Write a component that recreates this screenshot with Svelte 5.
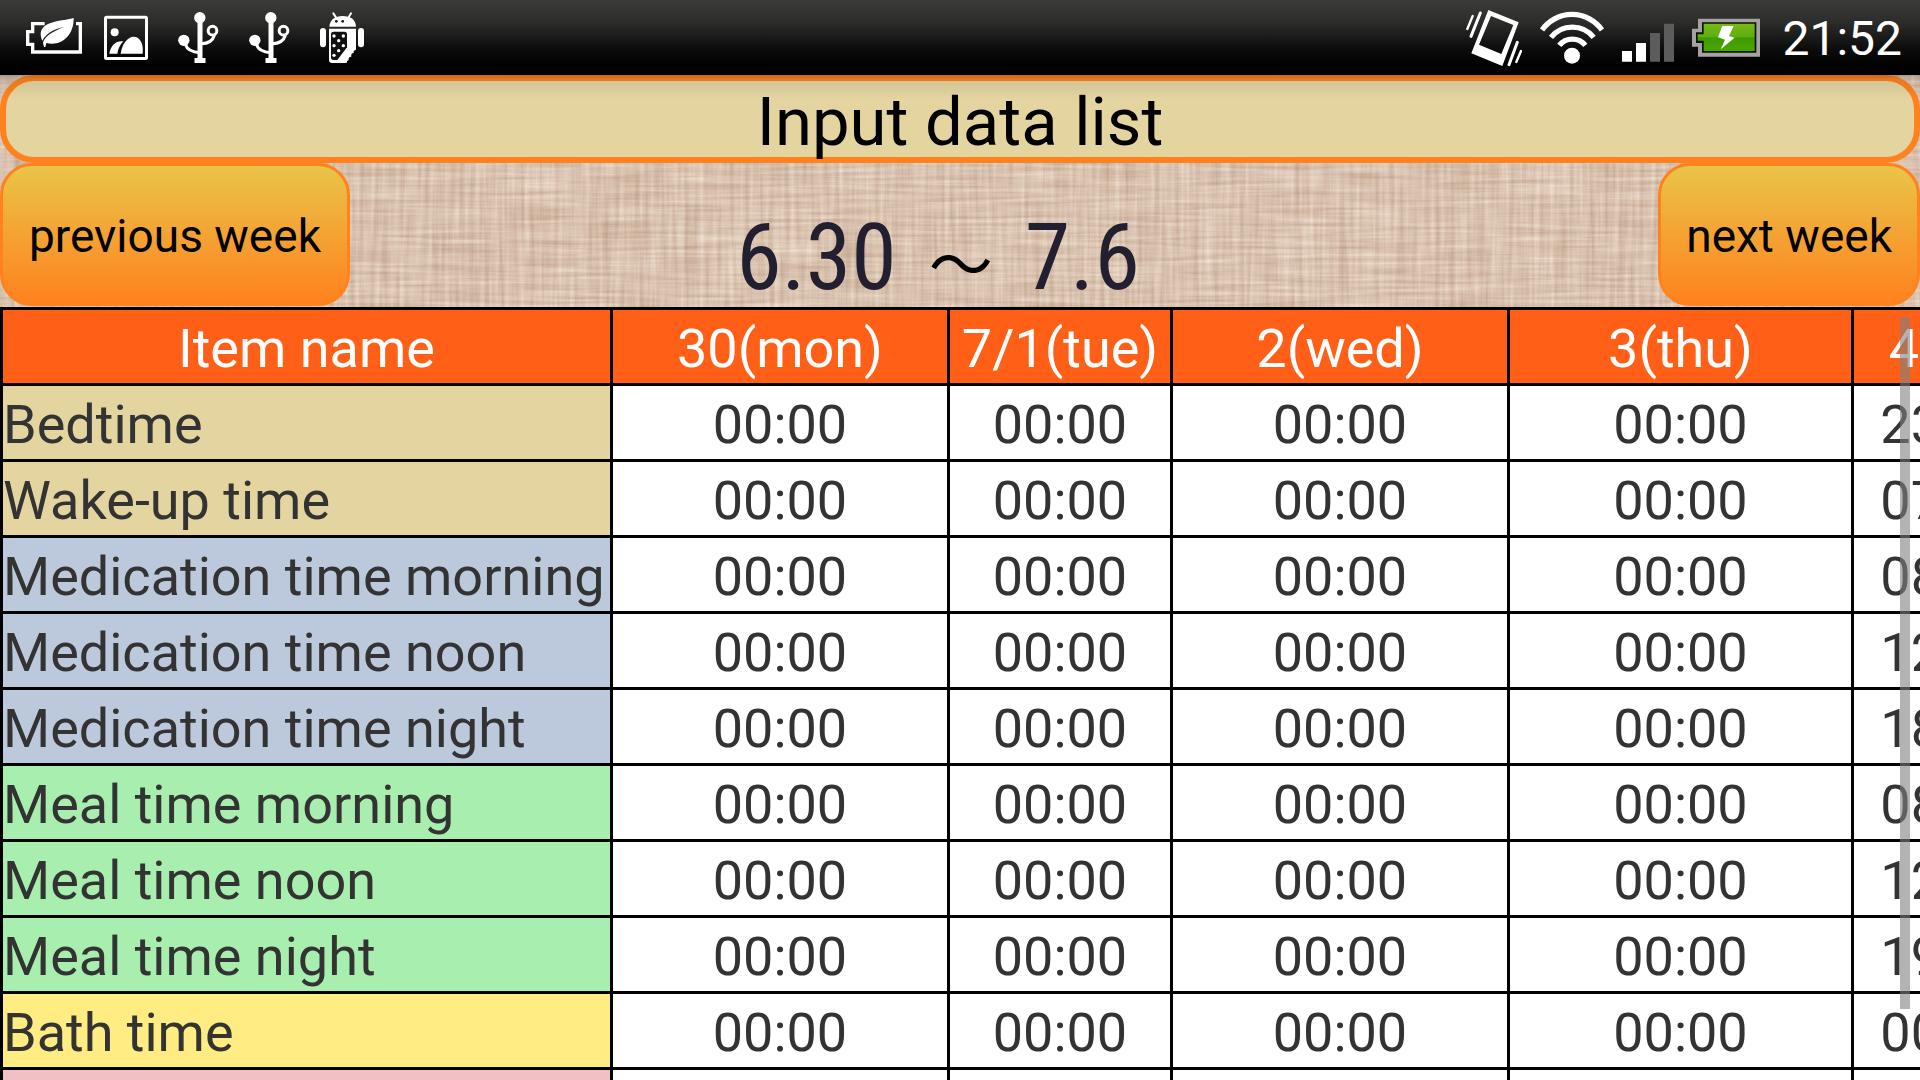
<script>
  const columns = [
    { label: 'Item name', width: 31.77 },
    { label: '30(mon)', width: 17.55 },
    { label: '7/1(tue)', width: 11.62 },
    { label: '2(wed)', width: 17.55 },
    { label: '3(thu)', width: 17.92 },
    { label: '4(fri)', width: 9.9 }
  ];

  const row = (name, tone, friday) => ({ name, tone, times: ['00:00', '00:00', '00:00', '00:00', friday] });
  const rows = [
    row('Bedtime', 'sleep', '23:00'),
    row('Wake-up time', 'sleep', '07:00'),
    row('Medication time morning', 'medication', '08:00'),
    row('Medication time noon', 'medication', '12:00'),
    row('Medication time night', 'medication', '18:00'),
    row('Meal time morning', 'meal', '08:00'),
    row('Meal time noon', 'meal', '12:00'),
    row('Meal time night', 'meal', '19:00'),
    row('Bath time', 'bath', '00:00'),
    { name: '', tone: 'other', times: ['', '', '', '', ''] }
  ];
</script>

{#snippet usb()}
  <svg class="usb" viewBox="533 0 122 225" aria-hidden="true">
    <g fill="#fff">
      <circle cx="598" cy="53" r="17" />
      <path d="M591 53H606V174H615V189H582V174H591Z" />
      <circle cx="550" cy="121" r="17" />
    </g>
    <g fill="none" stroke="#fff" stroke-width="9">
      <path d="M554 132C560 150 577 157 598 158" />
      <circle cx="636" cy="92" r="13" />
      <path d="M642 105C637 122 622 131 602 131" />
    </g>
  </svg>
{/snippet}

<div class="screen">
  <svg class="linen" aria-hidden="true">
    <filter id="weave" x="0" y="0" width="100%" height="100%" color-interpolation-filters="sRGB">
      <feTurbulence type="fractalNoise" baseFrequency="0.012 0.26" numOctaves="3" seed="4" result="h" />
      <feColorMatrix in="h" values="1 0 0 0 0  1 0 0 0 0  1 0 0 0 0  0 0 0 0 1" result="weft" />
      <feTurbulence type="fractalNoise" baseFrequency="0.2 0.01" numOctaves="3" seed="9" result="v" />
      <feColorMatrix in="v" values="1 0 0 0 0  1 0 0 0 0  1 0 0 0 0  0 0 0 0 1" result="warp" />
      <feComposite in="weft" in2="warp" operator="arithmetic" k1="0" k2="0.5" k3="0.5" k4="0" />
      <feColorMatrix values="0.3 0 0 0 0.7  0.38 0 0 0 0.57  0.42 0 0 0 0.475  0 0 0 0 1" />
    </filter>
    <rect width="100%" height="100%" filter="url(#weave)" />
  </svg>

  <header class="status">
    <div class="icons left">
      <svg class="eco" viewBox="78 0 168 225" aria-hidden="true">
        <path d="M134 71H98V95H83V133H98V156H241V71H228" fill="none" stroke="#fff" stroke-width="10" />
        <path d="M221 54C190 64 128 60 122 100C122 110 124 117 127 122C140 97 164 87 193 80C164 92 134 106 129 128L132 141H136L139 129C182 140 222 108 221 54Z" fill="#fff" />
      </svg>
      <svg class="photo" viewBox="312 0 132 225" aria-hidden="true">
        <rect x="316.500" y="51.500" width="123" height="124" rx="3" fill="none" stroke="#fff" stroke-width="9" />
        <g fill="#fff">
          <circle cx="344" cy="97" r="12" />
          <path d="M328 161C332 136 348 121 370 124C360 134 354 147 352 161Z" />
          <path d="M362 161C366 130 384 110 401 110C420 110 431 130 428 161Z" />
        </g>
      </svg>
      {@render usb()}
      {@render usb()}
      <svg class="droid" viewBox="960 0 132 225" aria-hidden="true">
        <g fill="#fff">
          <path d="M988 80C990 58 1006 48 1028 48C1051 48 1067 58 1068 80Z" />
          <rect x="960" y="84" width="18" height="58" rx="9" />
          <rect x="1074" y="84" width="18" height="58" rx="9" />
          <path d="M987 86H1068V149Q1059 151 1061 159Q1052 160 1054 170Q1044 171 1046 180Q1040 182 1040 189H996Q987 189 987 180Z" />
        </g>
        <path d="M1000 40L1008 52M1053 40L1046 52" stroke="#fff" stroke-width="6" stroke-linecap="round" />
        <g fill="#111">
          <circle cx="1009" cy="64" r="4" />
          <circle cx="1028" cy="64" r="4" />
          <path d="M1001 95H1033Q1041 95 1041 103V142L1012 180H1001Q993 180 993 172V103Q993 95 1001 95Z" />
        </g>
        <g fill="#fff">
          <circle cx="1002" cy="108" r="5" /><circle cx="1030" cy="108" r="5" />
          <circle cx="1016" cy="122" r="5" /><circle cx="1002" cy="137" r="5" />
          <circle cx="1030" cy="137" r="5" /><circle cx="1016" cy="152" r="5" />
          <circle cx="1002" cy="166" r="5" />
        </g>
      </svg>
    </div>

    <div class="icons right">
      <svg class="vibrate" viewBox="81 0 168 225" aria-hidden="true">
        <path d="M148 30L239 67L190 198L97 160ZM156 48L120 134L187 162L223 75Z" fill="#fff" fill-rule="evenodd" />
        <g stroke="#fff" stroke-linecap="round">
          <path d="M101 48L85 87M246 153L232 186" stroke-width="7" />
          <path d="M124 39L96 109M235 127L210 194" stroke-width="9" />
        </g>
      </svg>
      <svg class="wifi" viewBox="305 0 192 225" aria-hidden="true">
        <g fill="none" stroke="#fff" stroke-width="16">
          <path d="M311 90A110 110 0 0 1 491 90" />
          <path d="M338 112A82 82 0 0 1 466 112" />
          <path d="M363 136A50 50 0 0 1 441 136" />
        </g>
        <circle cx="401" cy="167" r="24" fill="#fff" />
      </svg>
      <svg class="signal" viewBox="552 0 156 225" aria-hidden="true">
        <path d="M552 153H582V185H552ZM594 129H624V185H594Z" fill="#fff" />
        <path d="M636 99H666V185H636ZM678 71H708V185H678Z" fill="#5c5c5c" />
      </svg>
      <svg class="battery" viewBox="756 0 204 225" aria-hidden="true">
        <defs>
          <linearGradient id="charge" x1="0" y1="0" x2="0" y2="1">
            <stop offset="0" stop-color="#78b818" />
            <stop offset="0.480" stop-color="#5cb00c" />
            <stop offset="0.520" stop-color="#3f9a00" />
            <stop offset="1" stop-color="#4aa804" />
          </linearGradient>
        </defs>
        <path d="M774 56H960V170H774V140H756V86H774Z" fill="#a5a1a5" />
        <path d="M786 67H949V158H786V129H768V97H786Z" fill="#0a1400" />
        <path d="M791 71H944V153H791V122H773V103H791Z" fill="url(#charge)" />
        <path d="M847 78L881 78L867 108L884 113L842 148L855 119L834 112Z" fill="#fff" />
      </svg>
      <time class="clock">21:52</time>
    </div>
  </header>

  <main>
    <h1>Input data list</h1>
    <nav class="week">
      <button type="button">previous week</button>
      <p class="range">
        <span>6.30</span>
        <span class="wave">～</span>
        <span>7.6</span>
      </p>
      <button type="button">next week</button>
    </nav>

    <div class="list">
      <table>
        <colgroup>
          {#each columns as column}
            <col style="width: {column.width}vw" />
          {/each}
        </colgroup>
        <thead>
          <tr>
            {#each columns as column}
              <th scope="col">{column.label}</th>
            {/each}
          </tr>
        </thead>
        <tbody>
          {#each rows as item}
            <tr>
              <th scope="row" class={item.tone}>{item.name}</th>
              {#each item.times as time}
                <td>{time}</td>
              {/each}
            </tr>
          {/each}
        </tbody>
      </table>
      <div class="thumb"></div>
    </div>
  </main>
</div>

<style>
  :global(body) {
    margin: 0;
    overflow: hidden;
    font-family: Roboto, "Noto Sans", sans-serif;
  }
  .screen {
    position: relative;
    display: flex;
    flex-direction: column;
    height: 100vh;
    overflow: hidden;
    background: #dcc4b0;
  }
  .linen {
    position: absolute;
    inset: 0;
    width: 100%;
    height: 320px;
  }
  .status {
    position: relative;
    display: flex;
    justify-content: space-between;
    height: 75px;
    padding: 0 18px 0 26px;
    background: linear-gradient(#3b3b39 0, #2c2c2b 30%, #0c0c0c 65%, #000 90%);
    color: #fff;
  }
  .icons {
    display: flex;
    align-items: center;
  }
  .icons svg {
    flex: none;
    height: 75px;
  }
  .left {
    gap: 30px;
  }
  .right {
    gap: 18px;
  }
  .eco, .vibrate { width: 56px; }
  .photo, .droid { width: 44px; }
  .photo { margin-left: -8px; }
  .usb { width: 41px; }
  .wifi { width: 64px; }
  .signal { width: 52px; }
  .battery { width: 68px; }
  .clock {
    margin-left: 4px;
    padding-top: 2px;
    font-size: 48px;
    line-height: 73px;
  }
  main {
    position: relative;
    display: flex;
    flex: 1;
    flex-direction: column;
    min-height: 0;
  }
  main::before {
    position: absolute;
    z-index: 1;
    inset: 0 0 auto;
    height: 24px;
    background: linear-gradient(rgba(0, 0, 0, 0.2), rgba(0, 0, 0, 0.08) 20%, transparent);
    content: "";
  }
  h1 {
    margin: 0;
    padding-top: 6px;
    border: 6px solid #ff821e;
    border-radius: 34px;
    background: #e3d4a0;
    color: #000;
    font-size: 67px;
    font-weight: 400;
    line-height: 70px;
    text-align: center;
  }
  .week {
    display: grid;
    grid-template-columns: 1fr auto 1fr;
    height: 144px;
  }
  button {
    justify-self: start;
    height: 143px;
    padding: 2px 26px 0;
    border: 3px solid #ff821e;
    border-radius: 32px;
    background: linear-gradient(#e9c448, #ff821e);
    color: #000;
    font-family: inherit;
    font-size: 46px;
  }
  button:last-child {
    justify-self: end;
    padding: 2px 25px 0;
  }
  .range {
    display: flex;
    align-items: flex-end;
    gap: 32px;
    margin: 0;
    padding-right: 44px;
    color: #221f30;
    font-family: "Roboto Condensed", "Liberation Sans Narrow", Roboto, sans-serif;
    font-size: 92px;
    line-height: 98px;
  }
  .wave {
    color: #000;
    font-family: "Noto Sans CJK JP", sans-serif;
    font-size: 64px;
    line-height: 94px;
  }
  .list {
    position: relative;
    flex: 1;
    min-height: 0;
    overflow: hidden;
  }
  table {
    width: calc(106.31vw + 3px);
    border-top: 3px solid #000;
    border-left: 3px solid #000;
    border-spacing: 0;
    table-layout: fixed;
    background: #fff;
    color: #333;
    font-size: 54px;
    line-height: 69px;
  }
  th, td {
    height: 69px;
    padding: 4px 0 0;
    border-right: 3px solid #000;
    border-bottom: 3px solid #000;
    font-weight: 400;
    text-align: center;
    white-space: nowrap;
  }
  thead th {
    background: #ff5f17;
    color: #fff;
  }
  tbody th {
    text-align: left;
  }
  .sleep { background: #e3d4a0; }
  .medication { background: #bcc8dc; }
  .meal { background: #a8efaf; }
  .bath { background: #ffed83; }
  .other { background: #f0c0c4; }
  .thumb {
    position: absolute;
    top: 10px;
    right: 10px;
    bottom: 71px;
    width: 10px;
    background: rgba(128, 128, 128, 0.6);
  }
</style>
